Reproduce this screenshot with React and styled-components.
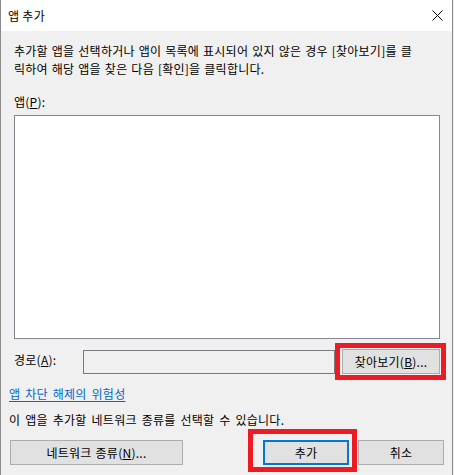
import React from 'react';
import styled, { createGlobalStyle } from 'styled-components';

const GlobalStyle = createGlobalStyle`
  html, body {
    margin: 0;
    padding: 0;
    background: #f0f0f0;
  }
  body {
    font-family: "Noto Sans CJK KR", "Noto Sans", sans-serif;
    font-size: 12px;
    color: #000;
  }
`;

const Window = styled.div`
  width: 453px;
  height: 475px;
  box-sizing: border-box;
  border-left: 1px solid #8a8a8a;
  border-right: 1px solid #8a8a8a;
  background: #f0f0f0;
  display: flex;
  flex-direction: column;
  overflow: hidden;
`;

const TitleBar = styled.div`
  height: 31px;
  flex-shrink: 0;
  background: #ffffff;
  display: flex;
  align-items: center;
  justify-content: space-between;
  padding: 0 9px 0 7px;
`;

const Title = styled.span`
  font-size: 12px;
  line-height: 18px;
  margin-top: 1px;
  letter-spacing: 0.3px;
`;

const CloseIcon = styled.svg`
  width: 11px;
  height: 11px;
  display: block;
`;

const Text = styled.div`
  line-height: 18px;
  margin-top: ${p => p.$top || 0}px;
  padding-left: ${p => p.$left || 0}px;
  word-spacing: ${p => p.$ws || 1}px;
  letter-spacing: 0.25px;
  white-space: nowrap;
`;

const Mnemonic = styled.u`
  text-decoration: underline;
  text-underline-offset: 1px;
`;

const ListBox = styled.div`
  margin: 4px 12px 0 13px;
  height: 224px;
  box-sizing: border-box;
  background: #ffffff;
  border: 1px solid #828790;
`;

const PathRow = styled.div`
  margin-top: 4px;
  padding: 0 6px 0 13px;
  display: flex;
  align-items: center;
`;

const FieldLabel = styled.span`
  width: 69px;
  flex-shrink: 0;
  line-height: 18px;
  margin-top: -4px;
  letter-spacing: 0.25px;
`;

const PathInput = styled.div`
  flex: 1;
  height: 24px;
  box-sizing: border-box;
  border: 1px solid #7a7a7a;
  background: #f0f0f0;
`;

const Highlight = styled.div`
  border: 5px solid #ed1c24;
  padding: ${p => p.$pad};
  display: flex;
  flex-shrink: 0;
`;

const Button = styled.div`
  width: ${p => p.$w}px;
  height: 25px;
  box-sizing: border-box;
  background: #e1e1e1;
  border: ${p => (p.$default ? '2px solid #0078d7' : '1px solid #adadad')};
  display: flex;
  align-items: center;
  justify-content: center;
  line-height: 18px;
  word-spacing: 1px;
  letter-spacing: 0.25px;
  flex-shrink: 0;
  margin-top: ${p => p.$top || 0}px;
  margin-left: ${p => p.$ml || 0}px;
`;

const Link = styled.a`
  color: #0066cc;
  text-decoration: underline;
  text-underline-offset: 2px;
`;

const ButtonRow = styled.div`
  padding: 0 8px 0 9px;
  display: flex;
  align-items: flex-start;
`;

const Spacer = styled.div`
  flex: 1;
`;

export default function App() {
  return (
    <>
      <GlobalStyle />
      <Window>
        <TitleBar>
          <Title>앱 추가</Title>
          <CloseIcon viewBox="0 0 11 11">
            <path d="M0.5 0.5 L10.5 10.5 M10.5 0.5 L0.5 10.5" stroke="#000" strokeWidth="1" fill="none" />
          </CloseIcon>
        </TitleBar>

        <Text $top={11} $left={13}>
          추가할 앱을 선택하거나 앱이 목록에 표시되어 있지 않은 경우 [찾아보기]를 클<br />
          릭하여 해당 앱을 찾은 다음 [확인]을 클릭합니다.
        </Text>

        <Text $top={15} $left={13}>
          앱(<Mnemonic>P</Mnemonic>):
        </Text>
        <ListBox />

        <PathRow>
          <FieldLabel>
            경로(<Mnemonic>A</Mnemonic>):
          </FieldLabel>
          <PathInput />
          <Highlight $pad="1px 1px 1px 2px">
            <Button $w={98}>
              찾아보기(<Mnemonic>B</Mnemonic>)...
            </Button>
          </Highlight>
        </PathRow>

        <Text $top={5} $left={8} $ws={2}>
          <Link>앱 차단 해제의 위험성</Link>
        </Text>

        <Text $top={8} $left={8} $ws={2}>
          이 앱을 추가할 네트워크 종류를 선택할 수 있습니다.
        </Text>

        <ButtonRow>
          <Button $w={173} $top={11}>
            네트워크 종류(<Mnemonic>N</Mnemonic>)...
          </Button>
          <Spacer />
          <Highlight $pad="6px 3px 2px 10px">
            <Button $w={86} $default>
              추가
            </Button>
          </Highlight>
          <Button $w={86} $top={11} $ml={1}>
            취소
          </Button>
        </ButtonRow>
      </Window>
    </>
  );
}
